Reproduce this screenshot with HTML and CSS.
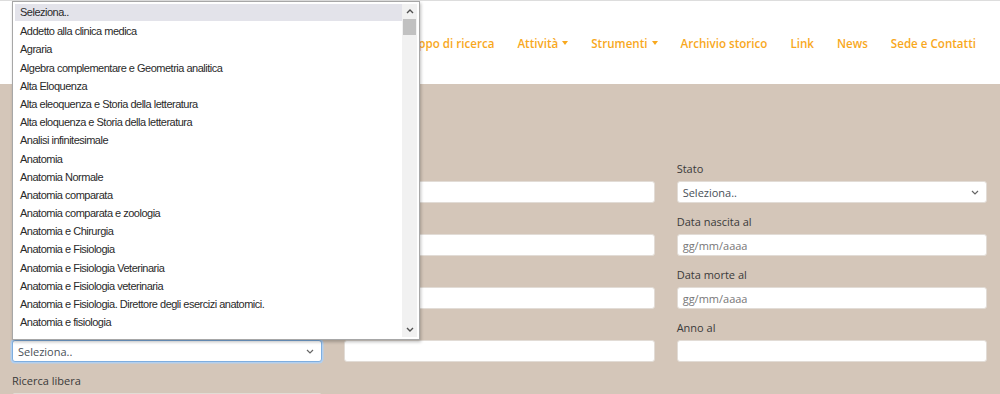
FILE: index.html
```html
<!DOCTYPE html>
<html lang="it">
<head>
    <meta charset="UTF-8">
    <meta name="viewport" content="width=device-width, initial-scale=1.0">
    <title>Ricerca avanzata</title>
    <link rel="stylesheet" href="styles.css">
</head>
<body>
    <header class="header">
        <nav class="nav">
            <a href="#">Gruppo di ricerca</a>
            <a href="#" class="caret">Attività</a>
            <a href="#" class="caret">Strumenti</a>
            <a href="#">Archivio storico</a>
            <a href="#">Link</a>
            <a href="#">News</a>
            <a href="#">Sede e Contatti</a>
        </nav>
    </header>

    <main class="main">
        <form class="search-form">
            <div class="field">
                <label>Nome</label>
                <div class="input"></div>
            </div>
            <div class="field">
                <label>Cognome</label>
                <div class="input"></div>
            </div>
            <div class="field">
                <label>Stato</label>
                <div class="input select">
                    <span>Seleziona..</span>
                    <svg width="8" height="5" viewBox="0 0 8 5"><path d="M1 1l3 3 3-3" fill="none" stroke="#666" stroke-width="1.2"/></svg>
                </div>
            </div>

            <div class="field">
                <label>Nato a</label>
                <div class="input"></div>
            </div>
            <div class="field">
                <label>Nato dal</label>
                <div class="input placeholder">gg/mm/aaaa</div>
            </div>
            <div class="field">
                <label>Data nascita al</label>
                <div class="input placeholder">gg/mm/aaaa</div>
            </div>

            <div class="field">
                <label>Morto a</label>
                <div class="input"></div>
            </div>
            <div class="field">
                <label>Morto dal</label>
                <div class="input placeholder">gg/mm/aaaa</div>
            </div>
            <div class="field">
                <label>Data morte al</label>
                <div class="input placeholder">gg/mm/aaaa</div>
            </div>

            <div class="field">
                <label>Disciplina</label>
                <div class="input select focus">
                    <span>Seleziona..</span>
                    <svg width="8" height="5" viewBox="0 0 8 5"><path d="M1 1l3 3 3-3" fill="none" stroke="#666" stroke-width="1.2"/></svg>
                </div>
            </div>
            <div class="field">
                <label>Anno dal</label>
                <div class="input"></div>
            </div>
            <div class="field">
                <label>Anno al</label>
                <div class="input"></div>
            </div>

            <div class="field">
                <label>Ricerca libera</label>
                <div class="input"></div>
            </div>
        </form>
    </main>

    <!-- open list of the "Disciplina" select -->
    <div class="popup">
        <ul class="options">
            <li class="active">Seleziona..</li>
            <li>Addetto alla clinica medica</li>
            <li>Agraria</li>
            <li>Algebra complementare e Geometria analitica</li>
            <li>Alta Eloquenza</li>
            <li>Alta eleoquenza e Storia della letteratura</li>
            <li>Alta eloquenza e Storia della letteratura</li>
            <li>Analisi infinitesimale</li>
            <li>Anatomia</li>
            <li>Anatomia Normale</li>
            <li>Anatomia comparata</li>
            <li>Anatomia comparata e zoologia</li>
            <li>Anatomia e Chirurgia</li>
            <li>Anatomia e Fisiologia</li>
            <li>Anatomia e Fisiologia Veterinaria</li>
            <li>Anatomia e Fisiologia veterinaria</li>
            <li>Anatomia e Fisiologia. Direttore degli esercizi anatomici.</li>
            <li>Anatomia e fisiologia</li>
        </ul>
        <div class="scrollbar">
            <svg class="arrow" width="8" height="5" viewBox="0 0 8 5"><path d="M1 4l3-3 3 3" fill="none" stroke="#505050" stroke-width="1.4"/></svg>
            <div class="track"><div class="thumb"></div></div>
            <svg class="arrow" width="8" height="5" viewBox="0 0 8 5"><path d="M1 1l3 3 3-3" fill="none" stroke="#505050" stroke-width="1.4"/></svg>
        </div>
    </div>
</body>
</html>
```

FILE: styles.css
```css
* {
    margin: 0;
    padding: 0;
    box-sizing: border-box;
}

body {
    font-family: "Open Sans", sans-serif;
    background: #d4c6b9;
    color: #333;
    height: 394px;
    overflow: hidden;
    border-top: 1px solid #ddd;
}

.header {
    height: 83px;
    background: #fff;
    display: flex;
    align-items: center;
    justify-content: flex-end;
    padding-right: 24px;
}

.nav {
    display: flex;
    gap: 23px;
    margin-top: 1px;
}

.nav a {
    color: #f8a81d;
    font-size: 11.6px;
    font-weight: 600;
    text-decoration: none;
    display: flex;
    align-items: center;
}

.nav a.caret::after {
    content: "";
    margin-left: 4px;
    border-top: 4px solid #f8a81d;
    border-left: 3.5px solid transparent;
    border-right: 3.5px solid transparent;
}

.main {
    padding: 77px 13px 0 12px;
}

.search-form {
    display: grid;
    grid-template-columns: repeat(3, 1fr);
    column-gap: 22px;
}

.field {
    margin-bottom: 11px;
}

.field label {
    display: block;
    font-size: 11px;
    line-height: 15px;
    color: #3a3a3a;
    margin-bottom: 5px;
}

.input {
    height: 22px;
    background: #fff;
    border: 1px solid #e2dcd6;
    border-radius: 3px;
    font-size: 11px;
    color: #495057;
    padding: 0 5px;
    display: flex;
    align-items: center;
}

.input.placeholder {
    color: #777;
}

.select {
    justify-content: space-between;
    padding-right: 7px;
}

.select.focus {
    border-color: #7eaee0;
    box-shadow: 0 0 0 1.5px #b3cfee;
}

.popup {
    position: absolute;
    top: 1px;
    left: 12px;
    width: 408px;
    height: 339px;
    background: #fff;
    border: 1px solid #a7a7a7;
    box-shadow: 1px 2px 3px rgba(0, 0, 0, 0.25);
    display: flex;
    padding: 2px;
}

.options {
    flex: 1;
    list-style: none;
    font-family: "Liberation Sans", Arial, sans-serif;
    font-size: 11px;
    letter-spacing: -0.5px;
    color: #2a2a2a;
}

.options li {
    height: 18.2px;
    line-height: 18px;
    padding-left: 5px;
    white-space: nowrap;
}

.options li.active {
    background: #e3e3ea;
    height: 17px;
    margin-bottom: 1.2px;
    line-height: 17px;
}

.scrollbar {
    width: 15px;
    background: #f1f1f1;
    display: flex;
    flex-direction: column;
    align-items: center;
}

.scrollbar .arrow {
    margin: 5px 0;
}

.track {
    flex: 1;
    width: 100%;
}

.thumb {
    height: 16px;
    background: #c1c1c1;
    margin: 0 1px;
}
```
